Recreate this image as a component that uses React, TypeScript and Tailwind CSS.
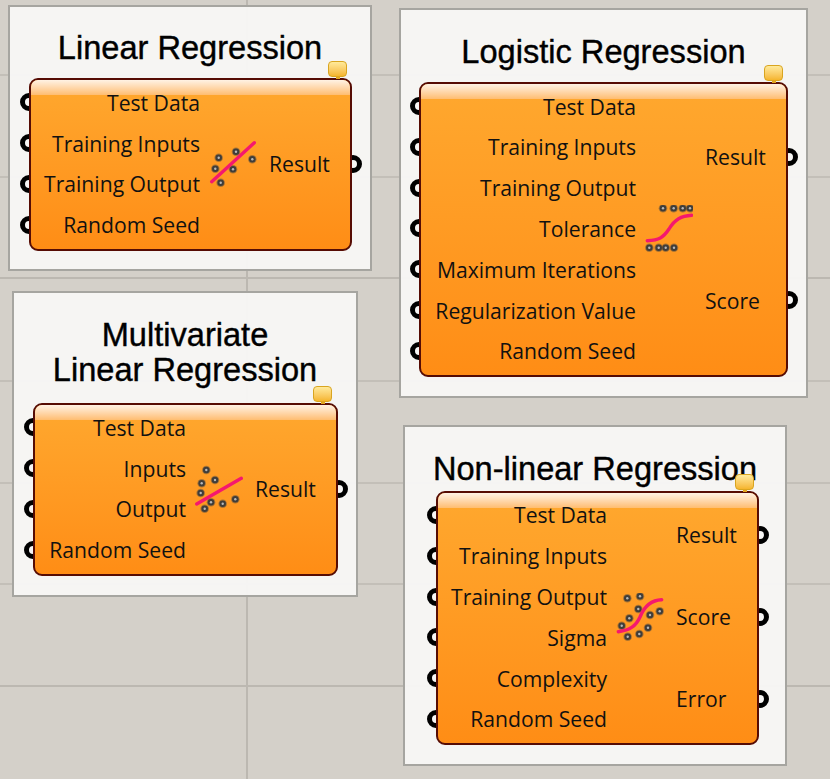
const sans = "font-['Open_Sans','Noto_Sans',sans-serif]";

function Grip({ side }: { side: "left" | "right" }) {
  const pos = side === "left" ? "left-[-11px]" : "right-[-12px]";
  return (
    <span
      className={`absolute top-1/2 -translate-y-1/2 -z-10 w-[18px] h-[18px] rounded-full border-[5px] border-black bg-[#f7f6f5] ${pos}`}
    />
  );
}

function Icon({ pts, d }: { pts: number[][]; d: string }) {
  return (
    <svg width="48" height="48" viewBox="0 0 48 48" fill="none" className="shrink-0">
      {pts.map(([x, y], i) => (
        <g key={i}>
          <circle cx={x} cy={y} r={4.3} fill="#4a4742" opacity={0.45} />
          <circle cx={x} cy={y} r={3.3} fill="#3f3d3a" />
          <circle cx={x} cy={y} r={1.2} fill="#b8b8b8" />
        </g>
      ))}
      <path d={d} stroke="#f5186e" strokeWidth="3.4" strokeLinecap="round" />
    </svg>
  );
}

function Node(props: {
  box: string;
  inCol: string;
  balloon: string;
  inputs: string[];
  outputs: string[];
  icon: React.ReactNode;
}) {
  const { box, inCol, balloon, inputs, outputs, icon } = props;
  return (
    <div
      className={`relative flex items-stretch rounded-[9px] border-2 border-[#560c04] bg-gradient-to-b from-[#ffa82e] to-[#ff8d15] pt-[1px] pb-[3px] text-[21.15px] leading-none text-[#111] ${sans} ${box}`}
    >
      {/* gloss strip along the top */}
      <div className="absolute left-0 right-0 top-0 h-[15px] rounded-t-[7px] bg-gradient-to-b from-[#fff2e4] to-[#ffbd70]" />
      <div className={`absolute top-[-19px] w-[19px] h-[16px] rounded-[4px] border border-[#d9a520] bg-gradient-to-b from-[#ffea9a] to-[#f5b52a] ${balloon}`}>
        <span className="absolute left-1/2 top-full -translate-x-1/2 w-[4px] h-[3px] bg-[#e0a520]" />
      </div>
      <div className={`relative flex flex-col justify-center ${inCol}`}>
        {inputs.map((t) => (
          <div key={t} className="flex items-center justify-end h-[40.8px] whitespace-nowrap">
            {t}
          </div>
        ))}
      </div>
      <div className="relative flex items-center pl-[9px]">{icon}</div>
      <div className="relative flex flex-col flex-1 justify-center">
        {outputs.map((t) => (
          <div key={t} className="flex-1 flex items-center whitespace-nowrap pl-[12px]">
            {t}
          </div>
        ))}
      </div>
      {/* input grips sit on the left edge, output grips on the right */}
      <div className="absolute left-0 top-[1px] bottom-[3px] flex flex-col justify-center">
        {inputs.map((t) => (
          <div key={t} className="relative h-[40.8px] w-0">
            <Grip side="left" />
          </div>
        ))}
      </div>
      <div className="absolute right-0 top-[1px] bottom-[3px] flex flex-col">
        {outputs.map((t) => (
          <div key={t} className="relative flex-1 w-0">
            <Grip side="right" />
          </div>
        ))}
      </div>
    </div>
  );
}

function Title({ children, cls }: { children: React.ReactNode; cls: string }) {
  return (
    <h2
      className={`text-center whitespace-nowrap font-['Liberation_Sans',sans-serif] text-[32.6px] leading-[35px] text-black [-webkit-text-stroke:0.4px_black] ${cls}`}
    >
      {children}
    </h2>
  );
}

const panel = "absolute isolate border-2 border-[#a6a5a0] bg-[#f8f7f6]/95";

export default function App() {
  return (
    <div className="relative w-[830px] h-[779px] overflow-hidden bg-[#d4d0c9]">
      {/* canvas grid */}
      <div className="absolute left-[246px] top-0 bottom-0 w-[2px] bg-[#bcb8b1]" />
      <div className="absolute left-0 right-0 top-[74px] h-[2px] bg-[#c3bfb8]" />
      <div className="absolute left-0 right-0 top-[176px] h-[2px] bg-[#c3bfb8]" />
      <div className="absolute left-0 right-0 top-[277px] h-[2px] bg-[#bcb8b1]" />
      <div className="absolute left-0 right-0 top-[380px] h-[2px] bg-[#c3bfb8]" />
      <div className="absolute left-0 right-0 top-[482px] h-[2px] bg-[#c3bfb8]" />
      <div className="absolute left-0 right-0 top-[583px] h-[2px] bg-[#c3bfb8]" />
      <div className="absolute left-0 right-0 top-[685px] h-[2px] bg-[#bcb8b1]" />

      <section className={`${panel} left-[8px] top-[5px] w-[364px] h-[266px]`}>
        <Title cls="pt-[23px] mb-[13px]">Linear Regression</Title>
        <Node
          box="ml-[19px] w-[323px] h-[173px]"
          inCol="w-[169px]"
          balloon="right-[3px]"
          inputs={["Test Data", "Training Inputs", "Training Output", "Random Seed"]}
          outputs={["Result"]}
          icon={
            <Icon
              pts={[[9.7, 17.7], [27, 11.7], [43.3, 19.3], [6.3, 28.7], [24, 29.3], [11.7, 42.7]]}
              d="M2.7 41.7L45.3 2.7"
            />
          }
        />
      </section>

      <section className={`${panel} left-[399px] top-[8px] w-[409px] h-[390px]`}>
        <Title cls="pt-[24px] mb-[13px]">Logistic Regression</Title>
        <Node
          box="ml-[18px] w-[369px] h-[295px]"
          inCol="w-[215px]"
          balloon="right-[3px]"
          inputs={["Test Data", "Training Inputs", "Training Output", "Tolerance", "Maximum Iterations", "Regularization Value", "Random Seed"]}
          outputs={["Result", "Score"]}
          icon={
            <Icon
              pts={[[18, 3.3], [28.7, 3.3], [37.7, 3.3], [45, 3.3], [4.3, 42.7], [13.7, 42.7], [20.7, 42.7], [29, 42.7]]}
              d="M2.3 35.7C14 35 18 33 24 24C30 14 36 11 46.7 10.3"
            />
          }
        />
      </section>

      <section className={`${panel} left-[12px] top-[291px] w-[346px] h-[306px]`}>
        <Title cls="pt-[24px] mb-[16px]">
          Multivariate
          <br />
          Linear Regression
        </Title>
        <Node
          box="ml-[19px] w-[305px] h-[173px]"
          inCol="w-[151px]"
          balloon="right-[4px]"
          inputs={["Test Data", "Inputs", "Output", "Random Seed"]}
          outputs={["Result"]}
          icon={
            <Icon
              pts={[[11.3, 5], [6.7, 18.3], [20, 15], [5.7, 28], [16, 37.3], [27.7, 38.7], [40.3, 34.3], [9.7, 43.7]]}
              d="M1.7 39L46.3 13.3"
            />
          }
        />
      </section>

      <section className={`${panel} left-[403px] top-[425px] w-[384px] h-[341px]`}>
        <Title cls="pt-[24px] mb-[5px]">Non-linear Regression</Title>
        <Node
          box="ml-[31px] w-[323px] h-[254px]"
          inCol="w-[169px]"
          balloon="right-[3px]"
          inputs={["Test Data", "Training Inputs", "Training Output", "Sigma", "Complexity", "Random Seed"]}
          outputs={["Result", "Score", "Error"]}
          icon={
            <Icon
              pts={[[11.3, 5.3], [24, 3.3], [22.3, 16], [34, 22], [43.7, 18.3], [13.3, 25.3], [5.7, 32.7], [32, 34.7], [23.3, 41], [11.7, 43.7]]}
              d="M2.3 38.7C14 37 20 33 24 24C28 14 34 7 45.7 6.7"
            />
          }
        />
      </section>
    </div>
  );
}
